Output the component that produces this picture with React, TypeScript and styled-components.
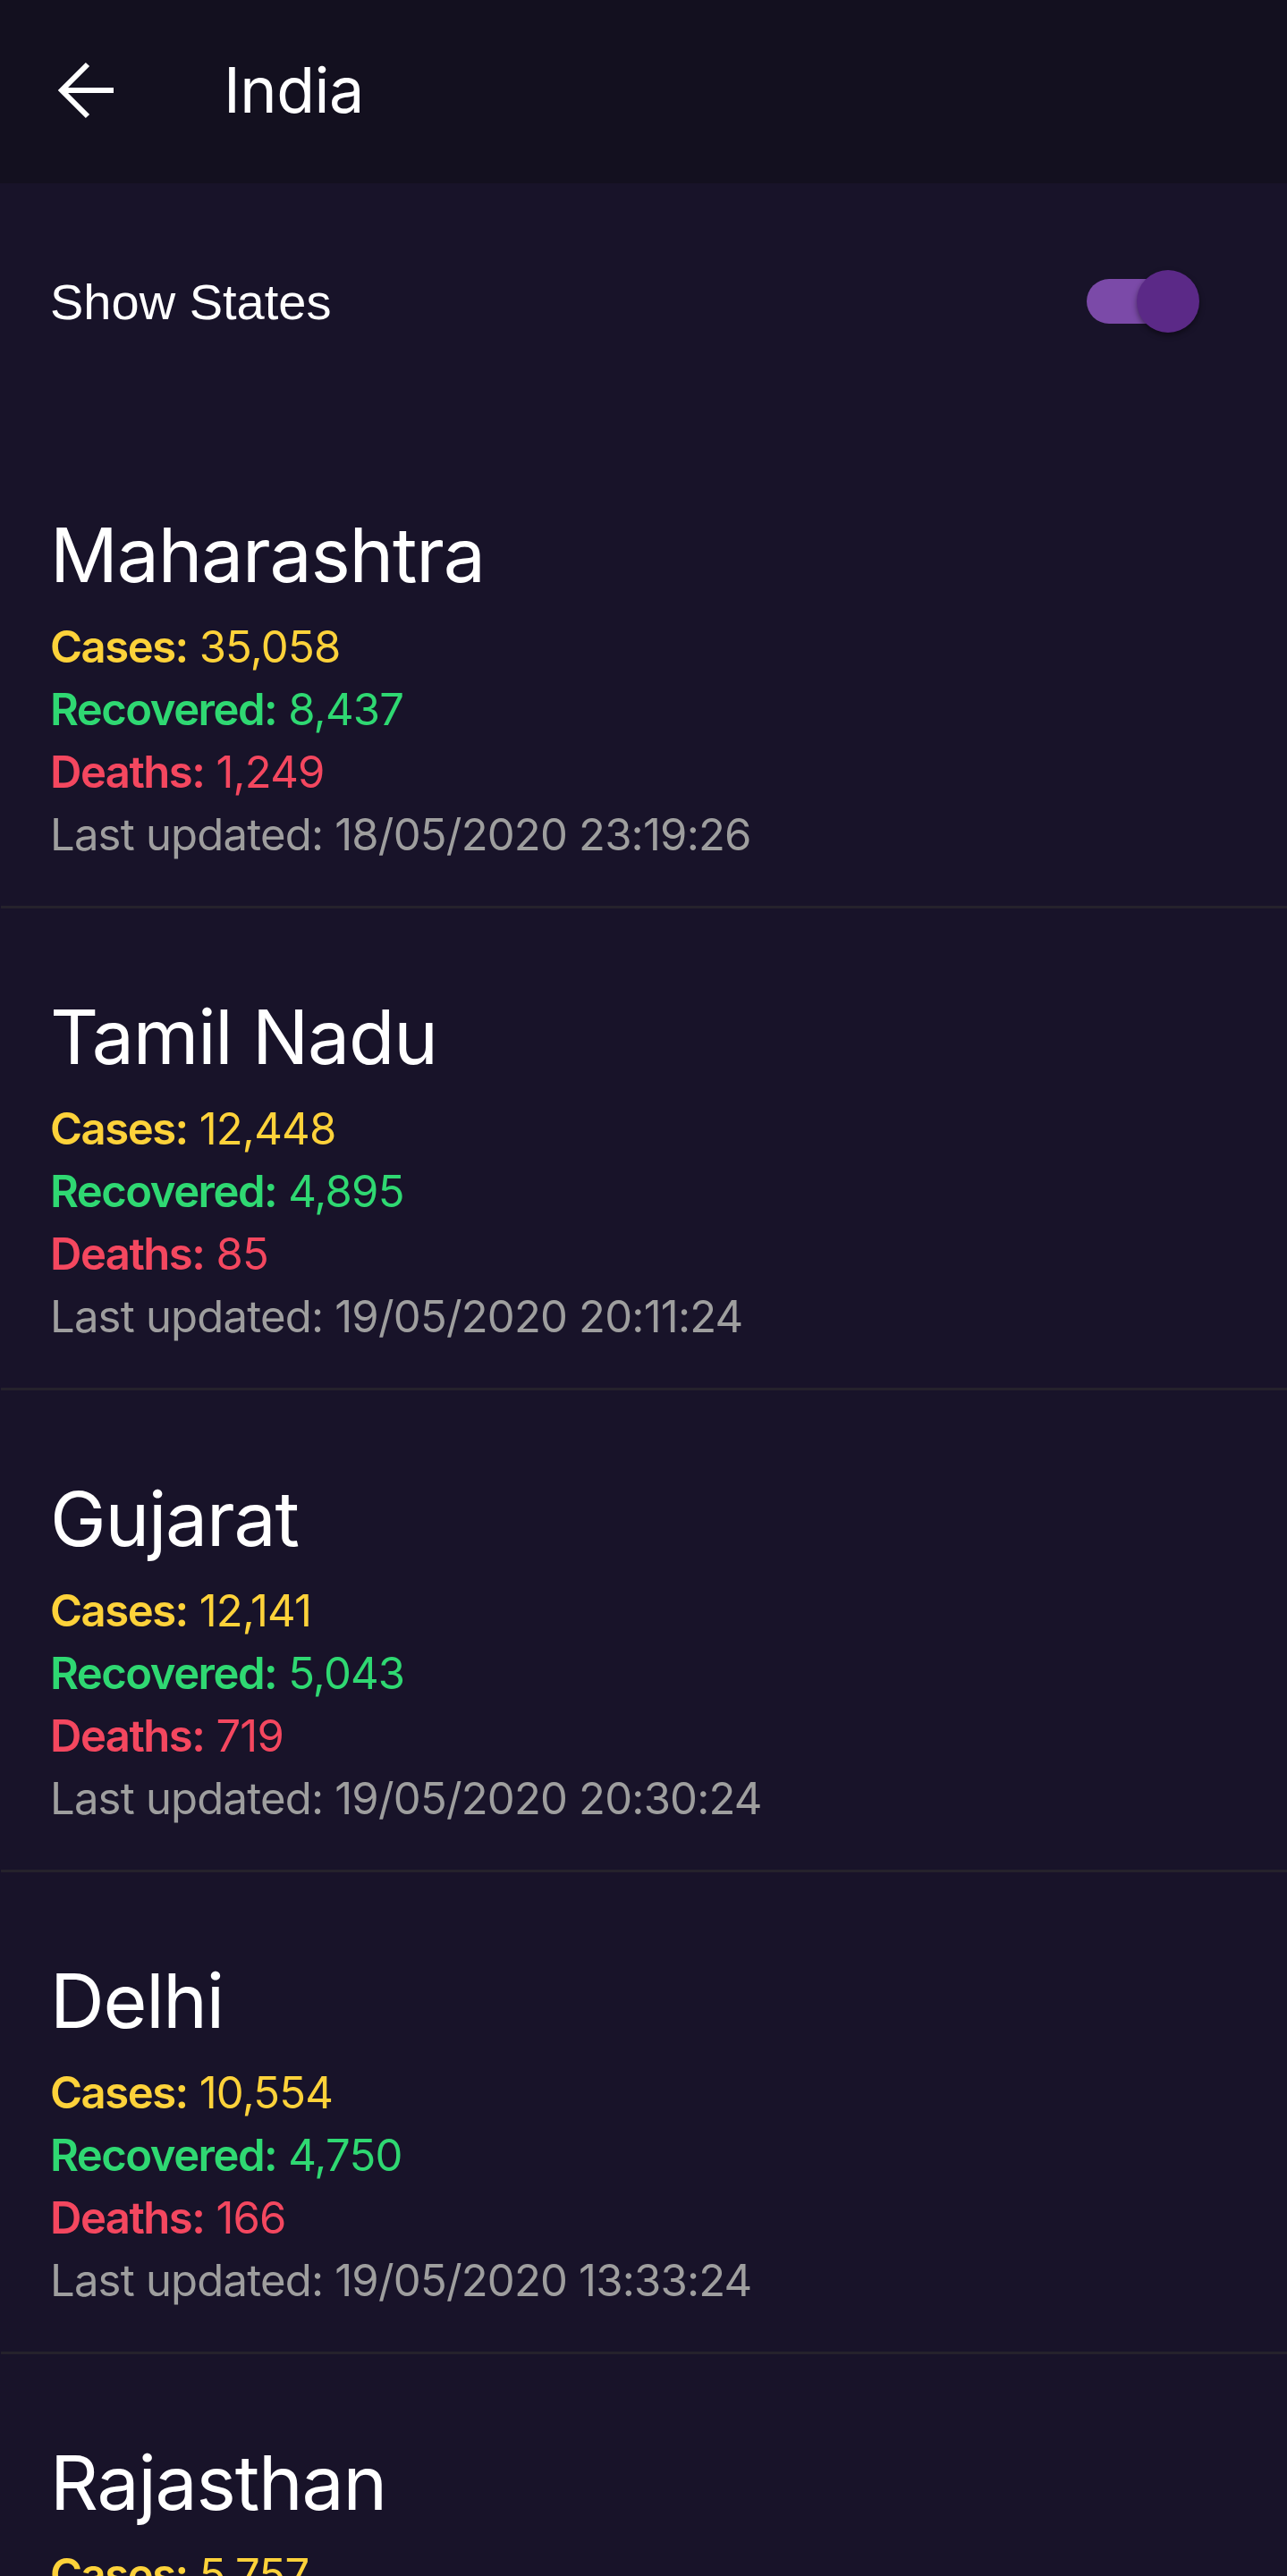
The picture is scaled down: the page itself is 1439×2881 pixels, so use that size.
import { useState } from "react";
import styled, { createGlobalStyle } from "styled-components";

const StateList = [
  { id: 1, name: "Maharashtra", cases: "35,058", recovered: "8,437", deaths: "1,249", updated: "18/05/2020 23:19:26" },
  { id: 2, name: "Tamil Nadu", cases: "12,448", recovered: "4,895", deaths: "85", updated: "19/05/2020 20:11:24" },
  { id: 3, name: "Gujarat", cases: "12,141", recovered: "5,043", deaths: "719", updated: "19/05/2020 20:30:24" },
  { id: 4, name: "Delhi", cases: "10,554", recovered: "4,750", deaths: "166", updated: "19/05/2020 13:33:24" },
  { id: 5, name: "Rajasthan", cases: "5,757", recovered: "3,337", deaths: "141", updated: "19/05/2020 19:45:24" },
];

const GlobalStyle = createGlobalStyle`
  html, body {
    margin: 0;
    padding: 0;
    background: #181329;
  }
  * { box-sizing: border-box; }
`;

const BackArrow = () => (
  <svg width="64" height="64" viewBox="0 0 64 64" fill="none">
    <path d="M63 32H7M34 3L5 32L34 61" stroke="#fff" strokeWidth="6" strokeLinejoin="miter" />
  </svg>
);

export default function App() {
  const [showStates, setShowStates] = useState(true);

  return (
    <>
      <GlobalStyle />
      <Screen>
        <Header>
          <IconButton aria-label="Back">
            <BackArrow />
          </IconButton>
          <HeaderTitle>India</HeaderTitle>
        </Header>

        <Content>
          <SettingRow>
            <SettingLabel>Show States</SettingLabel>
            <Switch
              role="switch"
              aria-checked={showStates}
              onClick={() => setShowStates(!showStates)}
            >
              <Track $on={showStates} />
              <Thumb $on={showStates} />
            </Switch>
          </SettingRow>

          {showStates && (
            <List>
              {StateList.map((item) => (
                <Card key={item.id}>
                  <StateName>{item.name}</StateName>
                  <Stat $color="#fdd23a">
                    <b>Cases:</b> {item.cases}
                  </Stat>
                  <Stat $color="#2fd872">
                    <b>Recovered:</b> {item.recovered}
                  </Stat>
                  <Stat $color="#f4475f">
                    <b>Deaths:</b> {item.deaths}
                  </Stat>
                  <Stat $color="#9e9e9e">Last updated: {item.updated}</Stat>
                </Card>
              ))}
            </List>
          )}
        </Content>
      </Screen>
    </>
  );
}

const Screen = styled.div`
  display: flex;
  flex-direction: column;
  height: 100vh;
  overflow: hidden;
  background: #181329;
  font-family: Inter, "Noto Sans", sans-serif;
`;

const Header = styled.header`
  display: flex;
  align-items: center;
  height: 205px;
  flex-shrink: 0;
  padding-left: 64px;
  padding-bottom: 4px;
  background: #13101f;
`;

const IconButton = styled.button`
  display: flex;
  align-items: center;
  justify-content: center;
  padding: 0;
  border: none;
  background: none;
  cursor: pointer;
  margin-right: 122px;
`;

const HeaderTitle = styled.h1`
  margin: 0;
  font-size: 70px;
  font-weight: 400;
  line-height: 1;
  letter-spacing: -0.5px;
  color: #fff;
`;

const Content = styled.main`
  flex: 1;
  overflow-y: auto;
  scrollbar-width: none;
`;

const SettingRow = styled.div`
  display: flex;
  align-items: center;
  justify-content: space-between;
  height: 140px;
  margin-top: 62px;
  padding: 0 98px 0 56px;
`;

const SettingLabel = styled.span`
  font-family: "Liberation Sans", Arial, sans-serif;
  font-size: 56px;
  color: #fff;
`;

const Switch = styled.button`
  position: relative;
  width: 126px;
  height: 70px;
  padding: 0;
  border: none;
  background: none;
  cursor: pointer;
`;

const Track = styled.span<{ $on: boolean }>`
  position: absolute;
  left: 0;
  top: 10px;
  width: 116px;
  height: 50px;
  border-radius: 25px;
  background: ${({ $on }) => ($on ? "#7b4aa8" : "#5c5870")};
`;

const Thumb = styled.span<{ $on: boolean }>`
  position: absolute;
  top: 0;
  left: ${({ $on }) => ($on ? "56px" : "0")};
  width: 70px;
  height: 70px;
  border-radius: 50%;
  background: ${({ $on }) => ($on ? "#5b2987" : "#d8d8d8")};
  box-shadow: 0 3px 6px rgba(0, 0, 0, 0.45);
`;

const List = styled.ul`
  list-style: none;
  margin: 70px 0 0;
  padding: 0;
`;

const Card = styled.li`
  padding: 94px 0 44px 55px;
  border-bottom: 3px solid #25222c;
  margin-left: 1px;
`;

const StateName = styled.h2`
  margin: 0 0 18px;
  font-size: 84px;
  font-weight: 400;
  line-height: 100px;
  letter-spacing: -1.2px;
  color: #fff;
`;

const Stat = styled.p<{ $color: string }>`
  margin: 0;
  font-size: 49px;
  line-height: 70px;
  font-weight: 400;
  letter-spacing: -0.8px;
  color: ${({ $color }) => $color};
  b {
    font-weight: 600;
    letter-spacing: -1.5px;
  }
`;
